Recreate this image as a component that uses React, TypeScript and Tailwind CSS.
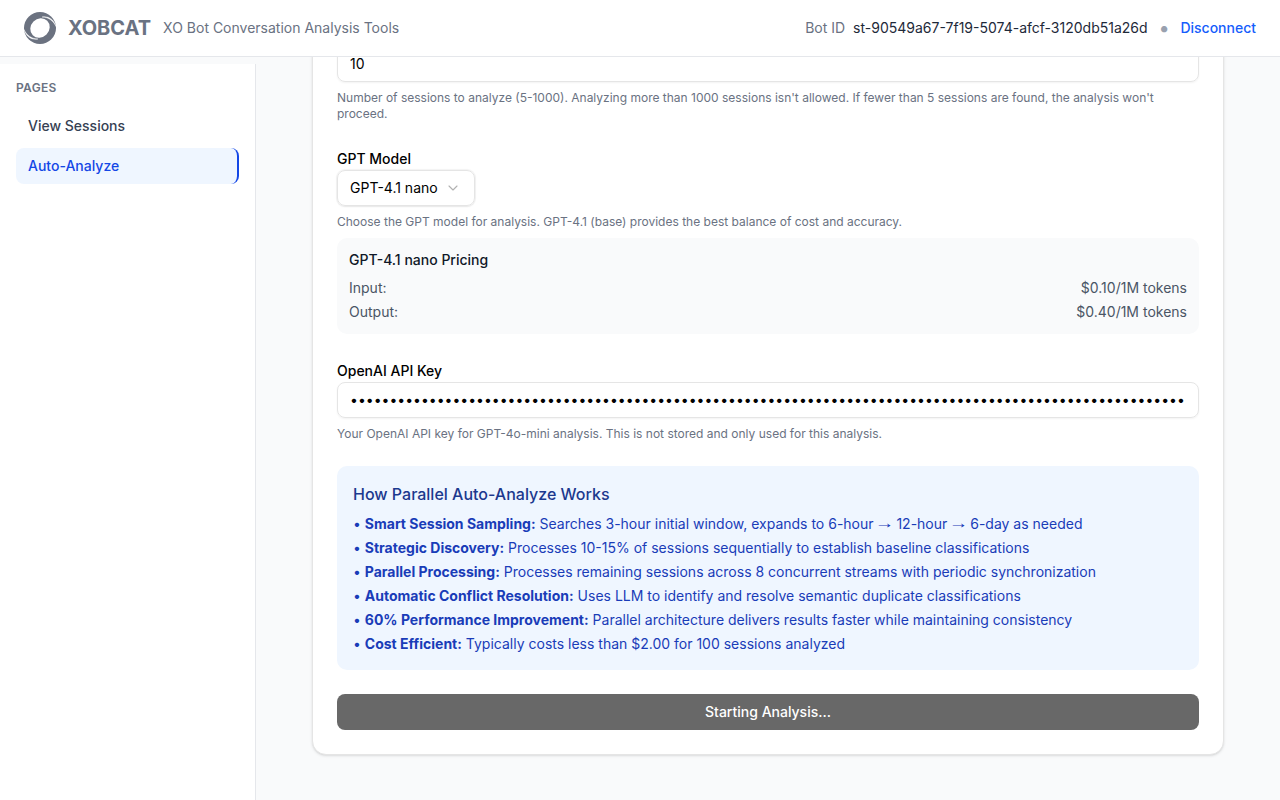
import { Fragment } from "react";

const apiKey = "x".repeat(164);

const steps = [
  ["Smart Session Sampling:", "Searches 3-hour initial window, expands to 6-hour → 12-hour → 6-day as needed"],
  ["Strategic Discovery:", "Processes 10-15% of sessions sequentially to establish baseline classifications"],
  ["Parallel Processing:", "Processes remaining sessions across 8 concurrent streams with periodic synchronization"],
  ["Automatic Conflict Resolution:", "Uses LLM to identify and resolve semantic duplicate classifications"],
  ["60% Performance Improvement:", "Parallel architecture delivers results faster while maintaining consistency"],
  ["Cost Efficient:", "Typically costs less than $2.00 for 100 sessions analyzed"],
];

function Logo() {
  return (
    <svg className="size-8 text-[#6b7280]" viewBox="0 0 32 32" fill="none">
      <circle cx="16" cy="16" r="16" fill="currentColor" />
      <ellipse cx="16" cy="16" rx="10.2" ry="9.2" fill="#fff" transform="rotate(-45 16 16)" />
      <path d="M0 17.5C2.5 23 7 26.7 14 27C8 28.3 2.2 25 0 17.5Z" fill="#fff" stroke="#fff" strokeWidth="0.4" />
      <path d="M32 14.5C29.5 9 25 5.3 18 5C24 3.7 29.8 7 32 14.5Z" fill="#fff" stroke="#fff" strokeWidth="0.4" />
    </svg>
  );
}

function Header() {
  return (
    <header className="flex h-[57px] shrink-0 items-center justify-between border-b border-gray-200 bg-white px-6">
      <div className="flex items-center gap-3">
        <Logo />
        <h1 className="text-xl font-bold text-gray-500">XOBCAT</h1>
        <span className="text-sm text-gray-500">XO Bot Conversation Analysis Tools</span>
      </div>
      <div className="flex items-center text-sm">
        <span className="text-gray-500">Bot ID</span>
        <span className="ml-2 text-gray-800">st-90549a67-7f19-5074-afcf-3120db51a26d</span>
        <span className="mr-[12.8px] ml-[11px] w-[9px] text-center text-[20px] leading-5 text-gray-400">•</span>
        <button className="font-medium text-blue-600">Disconnect</button>
      </div>
    </header>
  );
}

function Sidebar() {
  return (
    <aside className="mt-[7px] w-64 shrink-0 border-r border-gray-200 bg-white p-4">
      <h2 className="mb-3 text-xs font-semibold tracking-wide text-gray-500">PAGES</h2>
      <nav className="flex flex-col gap-1 text-sm font-medium">
        <a className="rounded-lg px-3 py-2 text-gray-700">View Sessions</a>
        <a className="rounded-lg border-r-2 border-blue-700 bg-blue-50 px-3 py-2 text-blue-700">Auto-Analyze</a>
      </nav>
    </aside>
  );
}

function StepText({ text }: { text: string }) {
  return (
    <>
      {text.split("→").map((part, i) => (
        <Fragment key={i}>
          {i > 0 && <span className="inline-block w-[15px] -translate-y-px scale-x-130 text-center font-['Liberation_Serif',serif] text-[15px] leading-none">→</span>}
          {part}
        </Fragment>
      ))}
    </>
  );
}

export default function App() {
  return (
    <div className="flex h-[800px] w-[1280px] flex-col overflow-hidden bg-gray-50 font-['Inter',sans-serif] text-black">
      <Header />
      <div className="flex min-h-0 flex-1">
        <Sidebar />
        <main className="flex min-w-0 flex-1 flex-col justify-end overflow-hidden px-14 pb-[45px]">
          <div className="flex flex-col gap-6 rounded-[14px] border border-[#e5e5e5] bg-white p-6 shadow-sm">
            <div>
              <input readOnly value="10" className="block h-9 w-full rounded-lg border border-[#e5e5e5] px-3 pt-[3px] pb-[5px] text-sm shadow-xs outline-none" />
              <p className="mt-2 text-xs text-gray-500">
                Number of sessions to analyze (5-1000). Analyzing more than 1000 sessions isn't allowed. If fewer than 5 sessions are found, the analysis won't proceed.
              </p>
            </div>
            <div>
              <div className="h-6"><label className="text-sm font-medium">GPT Model</label></div>
              <button className="flex h-9 w-[138px] items-center gap-[7.5px] rounded-lg border border-[#e5e5e5] px-3 text-sm shadow-[0_0_1px_1px_rgba(0,0,0,0.05),0_1px_2px_0_rgba(0,0,0,0.05)]">
                <span className="whitespace-nowrap">GPT-4.1 nano</span>
                <svg className="size-4 shrink-0 text-black opacity-30" viewBox="0 0 16 16" fill="none" stroke="currentColor" strokeWidth="1.1" strokeLinecap="round" strokeLinejoin="round">
                  <path d="m4 6 4 4 4-4" />
                </svg>
              </button>
              <p className="mt-2 text-xs text-gray-500">Choose the GPT model for analysis. GPT-4.1 (base) provides the best balance of cost and accuracy.</p>
              <div className="mt-2 rounded-[10px] bg-gray-50 p-3 text-sm text-gray-600">
                <h4 className="mb-2 font-medium text-gray-900">GPT-4.1 nano Pricing</h4>
                <div className="flex justify-between"><span>Input:</span><span>$0.10/1M tokens</span></div>
                <div className="mt-1 flex justify-between"><span>Output:</span><span>$0.40/1M tokens</span></div>
              </div>
            </div>
            <div>
              <div className="h-6"><label className="text-sm font-medium">OpenAI API Key</label></div>
              <input type="password" readOnly value={apiKey} className="block h-9 w-full rounded-lg border border-[#e5e5e5] px-3 pt-[3px] pb-[5px] text-sm shadow-xs outline-none" />
              <p className="mt-2 text-xs text-gray-500">Your OpenAI API key for GPT-4o-mini analysis. This is not stored and only used for this analysis.</p>
            </div>
            <section className="rounded-[10px] bg-blue-50 p-4">
              <h3 className="mb-2 font-medium text-blue-900">How Parallel Auto-Analyze Works</h3>
              <ul className="flex flex-col gap-1 text-sm text-blue-800">
                {steps.map(([name, text]) => (
                  <li key={name} className="h-5">• <strong>{name}</strong> <StepText text={text} /></li>
                ))}
              </ul>
            </section>
            <button className="h-9 shrink-0 rounded-lg bg-[#686868] text-sm font-medium text-white">Starting Analysis...</button>
          </div>
        </main>
      </div>
    </div>
  );
}
